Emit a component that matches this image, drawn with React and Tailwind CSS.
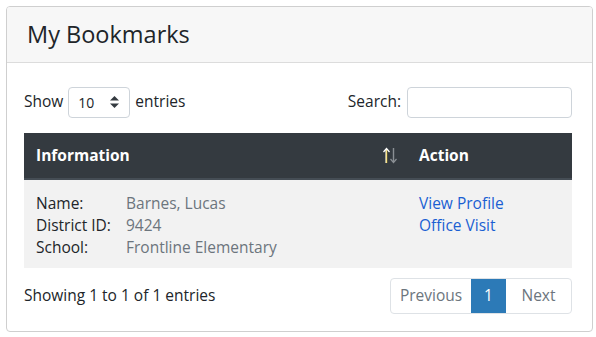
export default function App() {
  return (
    <div className="w-[596px] h-[337px] bg-white pt-[6px] pl-[6px]" style={{ fontFamily: '"Open Sans", sans-serif' }}>
      <div className="w-[587px] h-[326px] border border-[#cfcfcf] rounded-[4px] overflow-hidden flex flex-col">
        <div className="h-[56px] bg-[#f7f7f7] border-b border-[#dcdcdc] flex items-center pl-[20px]">
          <h1 className="text-[23.5px] text-[#212529] leading-none">My Bookmarks</h1>
        </div>
        <div className="pl-[17px] pr-[20px] pt-[24px] text-[15.5px] text-[#212529]">
          <div className="flex items-center justify-between h-[30px]">
            <div className="flex items-center gap-[5px]">
              <span>Show</span>
              <div className="w-[62px] h-[31px] border border-[#ced4da] rounded-[4px] flex items-center justify-between pl-[9px] pr-[10px] text-[14px]">
                <span>10</span>
                <svg width="9" height="12" viewBox="0 0 9 12"><path d="M4.5 0 L9 4.5 H0 Z" fill="#343a40" /><path d="M4.5 12 L9 7.5 H0 Z" fill="#343a40" /></svg>
              </div>
              <span>entries</span>
            </div>
            <div className="flex items-center gap-[6px]">
              <span>Search:</span>
              <div className="w-[165px] h-[31px] border border-[#ced4da] rounded-[4px]" />
            </div>
          </div>
          <div className="mt-[16px]">
            <div className="h-[47px] bg-[#343a40] border-b-2 border-[#454d55] text-white font-bold flex items-center">
              <div className="w-[383px] pl-[12px] pr-[10px] flex items-center justify-between">
                <span>Information</span>
                <svg width="14" height="17" viewBox="0 0 14 17">
                  <path d="M3.5 2 V16" stroke="#f1c40f" strokeWidth="1.4" />
                  <path d="M3 2 V16" stroke="#ffffff" strokeWidth="1" />
                  <path d="M0.5 5 L3.5 1.5 L6.5 5" stroke="#ffffff" strokeWidth="1.2" fill="none" />
                  <path d="M10.5 1 V15" stroke="#8a8f94" strokeWidth="1.4" />
                  <path d="M7.5 12 L10.5 15.5 L13.5 12" stroke="#8a8f94" strokeWidth="1.2" fill="none" />
                </svg>
              </div>
              <div className="pl-[12px]">Action</div>
            </div>
            <div className="bg-[#f2f2f2] flex pt-[12px] pb-[10px] leading-[22px]">
              <div className="w-[383px] pl-[12px] grid grid-cols-[90px_1fr]">
                <span>Name:</span><span className="text-[#6c757d]">Barnes, Lucas</span>
                <span>District ID:</span><span className="text-[#6c757d]">9424</span>
                <span>School:</span><span className="text-[#6c757d]">Frontline Elementary</span>
              </div>
              <div className="pl-[12px] flex flex-col text-[#1a5fd2]">
                <span>View Profile</span>
                <span>Office Visit</span>
              </div>
            </div>
          </div>
          <div className="mt-[10px] flex items-center justify-between">
            <span>Showing 1 to 1 of 1 entries</span>
            <div className="flex h-[36px] border border-[#dee2e6] rounded-[4px] overflow-hidden text-[#6c757d]">
              <span className="w-[80px] flex items-center justify-center">Previous</span>
              <span className="w-[35px] flex items-center justify-center bg-[#2c7ab7] text-white">1</span>
              <span className="w-[65px] flex items-center justify-center">Next</span>
            </div>
          </div>
        </div>
      </div>
    </div>
  );
}
